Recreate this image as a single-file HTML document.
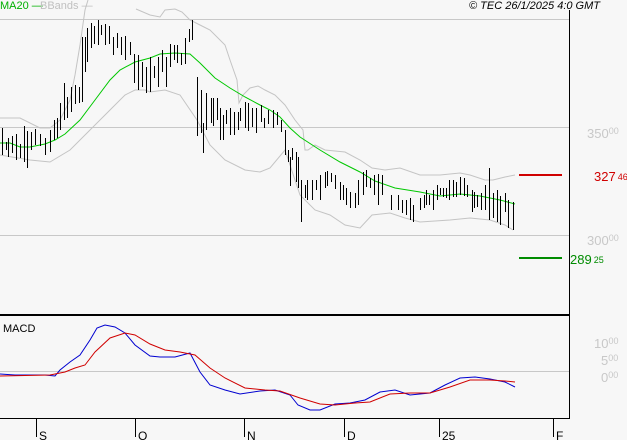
<!DOCTYPE html>
<html><head><meta charset="utf-8"><style>
html,body{margin:0;padding:0;background:#f7f7f7;}
svg{display:block;font-family:"Liberation Sans",sans-serif;}
</style></head><body>
<svg width="627" height="440" viewBox="0 0 627 440" xmlns="http://www.w3.org/2000/svg">
<rect width="627" height="440" fill="#f7f7f7"/>
<g stroke="#c8c8c8" stroke-width="1">
<line x1="0" y1="19.5" x2="569" y2="19.5"/>
<line x1="0" y1="127.5" x2="569" y2="127.5"/>
<line x1="0" y1="235.5" x2="569" y2="235.5"/>
<line x1="0" y1="371.5" x2="569" y2="371.5"/>
</g>
<g fill="none" stroke="#c4c4c4" stroke-width="1">
<polyline points="0,118 20,118 40,128 50,128 60,120 70,100 75,75 80,45 85,10 88,0"/>
<polyline points="136,9 150,15 160,17 165,10 175,9 182,12 190,20 200,25 210,30 225,45 230,60 237,80 239,103 243,95 250,88 258,86 265,90 275,95 285,105 295,120 303,130 305,150 308,150 315,145 325,150 345,152 360,160 372,168 385,170 400,168 420,175 440,175 460,173 470,175 485,180 493,180 505,177 515,175"/>
<polyline points="0,155 30,160 50,162 70,150 90,130 110,110 125,95 135,90 145,90 150,92 165,90 180,95 197,120 210,145 225,160 245,170 260,172 270,168 285,150 290,165 300,195 315,210 330,215 345,225 360,228 372,215 390,213 405,218 420,222 450,220 470,218 490,220 505,225 513,230"/>
</g>
<polyline fill="none" stroke="#00c800" stroke-width="1" points="0,143 10,143 20,147 30,147 45,144 55,140 65,134 80,120 95,100 110,80 120,70 135,62 150,58 160,54 175,53 190,54 200,63 215,78 230,88 245,97 260,105 270,110 280,117 290,128 300,137 320,150 340,162 360,172 375,181 395,188 420,192 440,196 460,194 480,196 500,200 515,204"/>
<g transform="translate(0.5,0)">
<path stroke="#000" stroke-width="1" fill="none" shape-rendering="crispEdges" d="M2,128V155M6,142V150M8,138V157M12,136V153M16,134V160M20,144V158M24,126V162M27,131V168M31,132V150M35,129V145M40,134V146M45,138V155M50,130V152M54,120V140M57,118V138M60,103V130M64,83V120M67,97V118M71,87V112M75,85V104M79,87V103M82,37V102M85,37V72M87,28V62M91,23V48M94,26V44M98,20V45M101,25V35M105,24V45M109,26V44M113,37V55M117,33V48M121,37V55M125,36V60M130,42V55M134,54V83M138,55V90M142,62V87M146,67V93M150,57V92M154,66V78M158,57V87M162,50V72M166,57V87M170,44V67M174,45V60M177,45V63M181,53V65M185,38V64M189,29V42M192,20V40M197,77V136M201,90V133M203,123V153M206,93V130M211,98V123M213,98V126M217,98V120M220,108V140M223,115V140M226,110V124M230,108V135M234,112V135M238,112V130M240,108V121M245,102V128M248,103V131M252,108V127M256,108V133M261,105V122M264,118V128M268,110V124M273,110V128M277,112V125M281,120V132M285,130V155M288,150V162M290,157V186M292,148V160M296,152V182M298,157V188M301,180V222M305,185V198M307,180V200M312,180V200M316,180V190M320,175V200M325,172V188M327,171V186M331,173V182M335,175V189M340,182V200M343,185V200M346,188V205M350,192V208M355,193V208M358,180V205M363,172V195M366,170V187M370,178V188M374,175V195M378,174V205M382,175V195M391,195V210M398,195V210M402,200V213M406,200V215M410,198V220M413,205V222M420,198V210M424,195V208M426,190V205M429,195V205M433,190V210M437,185V200M440,188V195M443,188V197M446,188V198M449,180V200M453,180V197M456,182V197M460,177V195M464,178V196M467,185V197M472,190V212M474,192V208M477,195V207M481,193V210M485,185V210M489,168V220M493,193V218M497,190V222M500,196V225M505,193V212M508,200V228M513,202V230"/>
</g>
<line x1="519" y1="175" x2="562" y2="175" stroke="#d00000" stroke-width="2"/>
<line x1="519" y1="258" x2="562" y2="258" stroke="#008c00" stroke-width="2"/>
<line x1="569.5" y1="10" x2="569.5" y2="419" stroke="#000" stroke-width="1"/>
<line x1="0" y1="315" x2="569" y2="315" stroke="#000" stroke-width="2"/>
<line x1="0" y1="418.5" x2="569" y2="418.5" stroke="#000" stroke-width="1"/>
<g stroke="#000" stroke-width="1">
<line x1="36.5" y1="419" x2="36.5" y2="437"/>
<line x1="135.5" y1="419" x2="135.5" y2="437"/>
<line x1="244.5" y1="419" x2="244.5" y2="437"/>
<line x1="344.5" y1="419" x2="344.5" y2="437"/>
<line x1="439.5" y1="419" x2="439.5" y2="437"/>
<line x1="553.5" y1="419" x2="553.5" y2="437"/>
</g>
<g font-size="12" fill="#000">
<text x="39" y="440">S</text><text x="138" y="440">O</text><text x="247" y="440">N</text><text x="347" y="440">D</text><text x="442" y="440">25</text><text x="556" y="440">F</text>
</g>
<polyline fill="none" stroke="#0000d0" stroke-width="1" points="0,374 15,375 25,375 45,375 55,376 60,370 70,362 80,355 90,340 97,328 105,325 115,327 125,333 135,345 150,356 160,357 175,357 190,353 200,372 210,385 225,390 240,394 260,391 275,390 290,395 298,405 310,410 320,410 335,404 350,403 365,400 380,392 395,390 410,395 430,393 445,385 460,378 475,377 490,379 505,382 515,387"/>
<polyline fill="none" stroke="#d00000" stroke-width="1" points="0,376 50,375 65,372 75,368 85,365 95,352 110,338 125,333 135,335 150,344 165,350 180,352 195,355 210,368 225,378 245,388 265,390 280,391 300,398 320,404 335,405 355,403 370,402 390,394 410,393 430,393 450,387 470,380 490,380 505,381 515,382"/>
<text x="3" y="332" font-size="11" fill="#000">MACD</text>
<text x="0" y="9" font-size="11" fill="#00b000">MA20 —</text>
<text x="40" y="9" font-size="11" fill="#c0c0c0">BBands —</text>
<text x="469" y="9" font-size="11" fill="#000" font-style="italic">© TEC 26/1/2025 4:0 GMT</text>
<g fill="#c8c8c8" font-size="13">
<text x="587" y="138">350<tspan font-size="9" dy="-4">00</tspan></text>
<text x="587" y="245">300<tspan font-size="9" dy="-4">00</tspan></text>
<text x="594" y="348">10<tspan font-size="9" dy="-4">00</tspan></text>
<text x="601" y="365">5<tspan font-size="9" dy="-4">00</tspan></text>
<text x="601" y="382">0<tspan font-size="9" dy="-4">00</tspan></text>
</g>
<text x="594" y="181" font-size="13" fill="#d00000">327<tspan font-size="9" dx="2" dy="-1">46</tspan></text>
<text x="570" y="264" font-size="13" fill="#008c00">289<tspan font-size="9" dx="2" dy="-1">25</tspan></text>
</svg>
</body></html>
